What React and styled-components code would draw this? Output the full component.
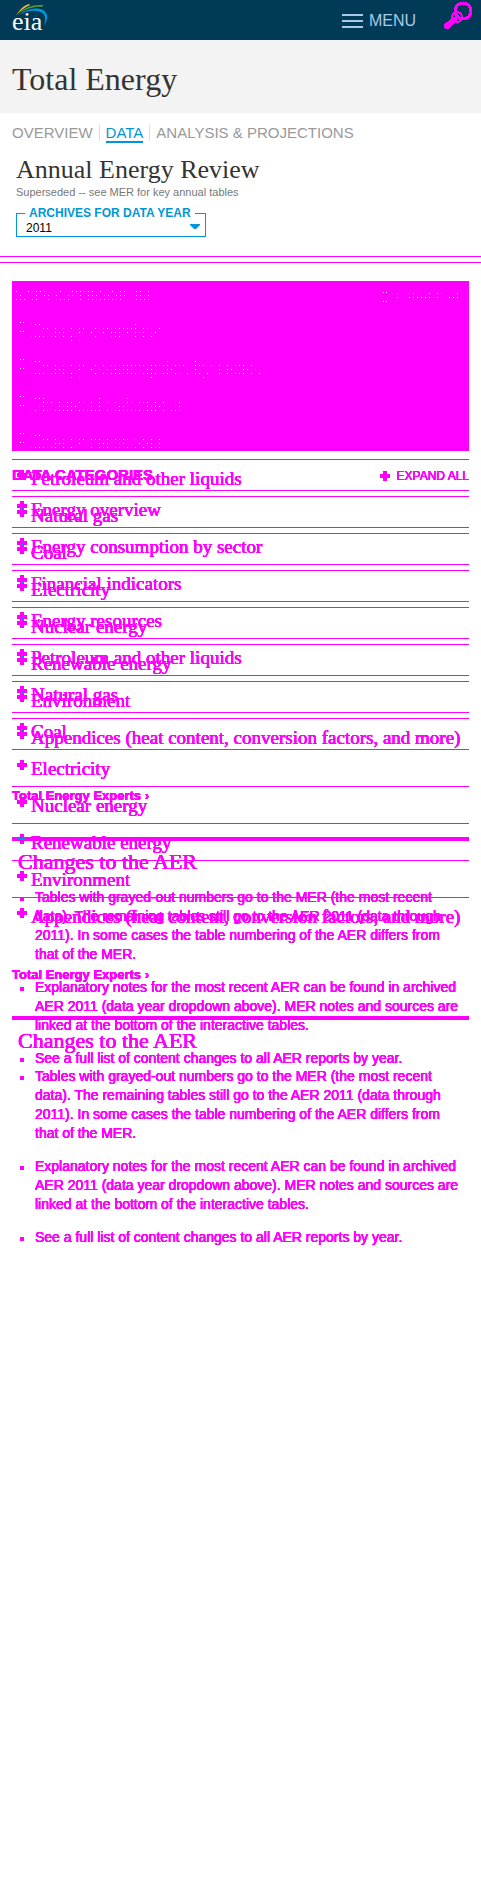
import React from 'react';
import styled, { createGlobalStyle, css } from 'styled-components';

const MAGENTA = '#ff00ff';
const BLUE = '#0096d7';
const SANS = '"Liberation Sans", Arial, sans-serif';
const SERIF = '"Liberation Serif", "Times New Roman", serif';

const GlobalStyle = createGlobalStyle`
  *, *::before, *::after { box-sizing: border-box; }
  body { margin: 0; background: #fff; color: #333; font-family: ${SANS}; }
  h1, h2, h3, p, ul { margin: 0; padding: 0; font-weight: 400; }
  ul { list-style: none; }
  a { color: inherit; text-decoration: none; }
  button { border: 0; padding: 0; background: none; color: inherit; font: inherit; text-align: left; text-shadow: inherit; cursor: pointer; }
`;

const TopBar = styled.header`
  display: flex;
  align-items: center;
  height: 40px;
  padding: 0 8px 0 12px;
  background: #003a57;
`;

const LogoLink = styled.a`
  display: block;
  height: 40px;
  margin-right: auto;
`;

const MenuButton = styled.button`
  display: flex;
  align-items: center;
  gap: 6px;
  margin-right: 25px;
  padding-top: 2px;
  color: #a9c9e8;
  font-size: 16px;
  line-height: 20px;
`;

const SearchButton = styled.button`
  display: block;
  height: 40px;
`;

const Hero = styled.div`
  padding: 21px 12px 16px;
  background: #f3f3f3;
`;

const PageTitle = styled.h1`
  font-family: ${SERIF};
  font-size: 32px;
  line-height: 36px;
`;

const Tabs = styled.nav`
  display: flex;
  align-items: flex-start;
  padding: 12px 12px 0;
  font-size: 15px;
  line-height: 16px;
`;

const Tab = styled.a`
  color: ${(p) => (p.$active ? BLUE : '#999')};
  border-bottom: 2px solid ${(p) => (p.$active ? BLUE : 'transparent')};
`;

const TabRule = styled.span`
  width: 1px;
  height: 16px;
  margin: 0 6px;
  background: #ddd;
`;

const Intro = styled.section`
  padding: 12px 16px 19px;
`;

const Title = styled.h2`
  font-family: ${SERIF};
  font-size: 26px;
  line-height: 30px;
`;

const Note = styled.p`
  color: #777;
  font-size: 11px;
  line-height: 14px;
`;

const Archive = styled.fieldset`
  position: relative;
  width: 190px;
  margin: 7px 0 0;
  padding: 0 6px 0 9px;
  border: 1px solid ${BLUE};
`;

const ArchiveLegend = styled.legend`
  margin-left: -1px;
  padding: 0 4px;
  color: ${BLUE};
  font-size: 12px;
  font-weight: 700;
  line-height: 14px;
`;

const YearSelect = styled.select`
  display: block;
  width: 100%;
  height: 16px;
  padding: 0;
  border: 0;
  appearance: none;
  background: transparent;
  color: #000;
  font: 12px/14px ${SANS};
`;

const Arrow = styled.svg`
  position: absolute;
  right: 5px;
  bottom: 6px;
  pointer-events: none;
`;

const Divider = styled.div`
  height: 7px;
  border: solid ${MAGENTA};
  border-width: 1px 0;
`;

const Stack = styled.main`
  display: grid;
  grid-template-columns: minmax(0, 1fr);
  align-items: start;
  padding: 18px 12px 0;
`;

const Layer = styled.div`
  grid-area: 1 / 1;
  color: ${MAGENTA};
  text-shadow: 0 0 ${MAGENTA}, 0 0 ${MAGENTA}, 0 0 ${MAGENTA}, 0 0 ${MAGENTA};
`;

const Block = styled.div`
  height: 170px;
  margin-bottom: 9px;
  background: ${MAGENTA};
`;

/* Lettering that shows only as scattered points on the solid block */
const specks = css`
  color: transparent;
  text-shadow: none;
  background: conic-gradient(from 270deg at 1px 1px, #fff 90deg, transparent 0) 0 0 / 4px 4px;
  -webkit-background-clip: text;
  background-clip: text;
`;

const ListHead = styled.div`
  display: flex;
  align-items: flex-start;
  justify-content: space-between;
  height: 30px;
  padding-top: 6px;
`;

const ListTitle = styled.h2`
  font-size: 15px;
  font-weight: 700;
  line-height: 18px;
  ${(p) => p.$faint && specks}
`;

const ExpandAll = styled.button`
  display: flex;
  align-items: center;
  gap: 7px;
  padding-top: 2px;
  font-size: 12px;
  line-height: 16px;
`;

const Label = styled.span`
  ${(p) => p.$faint && specks}
`;

const Row = styled.li`
  height: 37px;
  border-top: 1px solid ${MAGENTA};
`;

const RowButton = styled.button`
  display: flex;
  align-items: flex-start;
  gap: 4px;
  width: 100%;
  padding: 8px 0 0 5px;
  font-family: ${SERIF};
  font-size: 19px;
  line-height: 22px;
  white-space: nowrap;
`;

const Plus = styled.svg`
  position: relative;
  flex: none;
  margin-top: ${(p) => (p.$row ? '2px' : '0')};
  z-index: 1;
`;

const Experts = styled.p`
  margin: 31px 0;
  font-size: 13px;
  font-weight: 700;
  line-height: 20px;
`;

const Changes = styled.section`
  border-top: 4px solid ${MAGENTA};
  padding-top: 8px;
`;

const ChangesTitle = styled.h3`
  padding-left: 6px;
  font-family: ${SERIF};
  font-size: 22px;
  line-height: 26px;
`;

const Bullets = styled.ul`
  display: grid;
  gap: 14px;
  padding: 13px 8px 0;
  font-size: 14px;
  line-height: 19px;
`;

const Bullet = styled.li`
  display: flex;
  gap: 11px;

  &::before {
    content: '';
    flex: none;
    width: 4px;
    height: 4px;
    margin-top: 9px;
    background: ${MAGENTA};
  }
`;

const CATEGORIES = [
  'Energy overview',
  'Energy consumption by sector',
  'Financial indicators',
  'Energy resources',
  'Petroleum and other liquids',
  'Natural gas',
  'Coal',
  'Electricity',
  'Nuclear energy',
  'Renewable energy',
  'Environment',
  'Appendices (heat content, conversion factors, and more)',
];

const NOTES = [
  'Tables with grayed-out numbers go to the MER (the most recent data). The remaining tables still go to the AER 2011 (data through 2011). In some cases the table numbering of the AER differs from that of the MER.',
  'Explanatory notes for the most recent AER can be found in archived AER 2011 (data year dropdown above). MER notes and sources are linked at the bottom of the interactive tables.',
  'See a full list of content changes to all AER reports by year.',
];

function PlusIcon({ row, faint, tipped, crossed }) {
  return (
    <Plus $row={row} width="10" height="10" viewBox="0 0 10 10" aria-hidden="true" shapeRendering="crispEdges">
      <path d="M3 0h4v3h3v4H7v3H3V7H0V3h3z" fill={MAGENTA} />
      {crossed && <path d="M1 4h8v2H1z" fill={BLUE} />}
      {tipped && <path d="M4 0h2v2H4z" fill={BLUE} />}
      {faint && <path d="M3 0h1v1H3zM6 0h1v1H6zM3 9h1v1H3zM6 9h1v1H6z" fill="#fff" />}
    </Plus>
  );
}

function Contents({ upper }) {
  return (
    <>
      <ListHead>
        <ListTitle $faint={upper}>DATA CATEGORIES</ListTitle>
        <ExpandAll type="button">
          <PlusIcon faint={upper} />
          <Label $faint={upper}>EXPAND ALL</Label>
        </ExpandAll>
      </ListHead>
      <ul>
        {CATEGORIES.map((name, i) => {
          const faint = upper && i < 4;
          return (
            <Row key={name}>
              <RowButton type="button">
                <PlusIcon row faint={faint} tipped={upper && i > 4} crossed={!upper && i === 9} />
                <Label $faint={faint}>{name}</Label>
              </RowButton>
            </Row>
          );
        })}
      </ul>
      <Experts><a href="#experts">Total Energy Experts ›</a></Experts>
      <Changes>
        <ChangesTitle>Changes to the AER</ChangesTitle>
        <Bullets>
          {NOTES.map((note) => (
            <Bullet key={note}><span>{note}</span></Bullet>
          ))}
        </Bullets>
      </Changes>
    </>
  );
}

export default function App() {
  return (
    <>
      <GlobalStyle />
      <TopBar>
        <LogoLink href="#home" aria-label="eia home">
          <svg width="40" height="40" viewBox="0 0 40 40">
            <path d="M4 15.500C8 9 12 5.500 17 4l1 1C13 7 9 10 4 15.500z" fill="#ffc72c" />
            <path d="M7 13C13 7.500 21 4.500 31 5.200v1.600C22 6 15 8.500 7 13z" fill="#5d9732" />
            <path d="M6 15C13 10 21 7.500 28 9c7 1.500 10 8 4 16.500 2.500-7.500 1-12.500-5-14C20 9.800 13 11.500 6 15z" fill={BLUE} />
            <text x="0" y="30" fontFamily="Liberation Serif, serif" fontSize="26" fill="#fff">eia</text>
          </svg>
        </LogoLink>
        <MenuButton type="button">
          <svg width="21" height="14" viewBox="0 0 21 14" aria-hidden="true">
            <path d="M0 0h21v2H0zM0 6h21v2H0zM0 12h21v2H0z" fill="currentColor" />
          </svg>
          MENU
        </MenuButton>
        <SearchButton type="button" aria-label="Search">
          <svg width="32" height="40" viewBox="0 0 32 40" fill="none" stroke={MAGENTA} shapeRendering="crispEdges">
            <circle cx="22" cy="11" r="8" strokeWidth="3" />
            <circle cx="16" cy="17" r="5" strokeWidth="2" />
            <circle cx="16" cy="17" r="2" strokeWidth="1" />
            <path d="M6 26l7-6" strokeWidth="6" strokeLinecap="round" />
            <path d="M11 21l6-6" strokeWidth="2" />
          </svg>
        </SearchButton>
      </TopBar>
      <Hero><PageTitle>Total Energy</PageTitle></Hero>
      <Tabs aria-label="Sections">
        <Tab href="#overview">OVERVIEW</Tab>
        <TabRule />
        <Tab href="#data" $active>DATA</Tab>
        <TabRule />
        <Tab href="#analysis">ANALYSIS &amp; PROJECTIONS</Tab>
      </Tabs>
      <Intro>
        <Title>Annual Energy Review</Title>
        <Note>Superseded -- see MER for key annual tables</Note>
        <Archive>
          <ArchiveLegend><label htmlFor="year">ARCHIVES FOR DATA YEAR</label></ArchiveLegend>
          <YearSelect id="year" defaultValue="2011">
            <option>2011</option>
          </YearSelect>
          <Arrow width="10" height="6" viewBox="0 0 10 6" aria-hidden="true">
            <path d="M0 0h10v1L6 5H4L0 1z" fill={BLUE} />
          </Arrow>
        </Archive>
      </Intro>
      <Divider />
      <Stack>
        <Layer>
          <Block />
          <Contents />
        </Layer>
        <Layer>
          <Contents upper />
        </Layer>
      </Stack>
    </>
  );
}
